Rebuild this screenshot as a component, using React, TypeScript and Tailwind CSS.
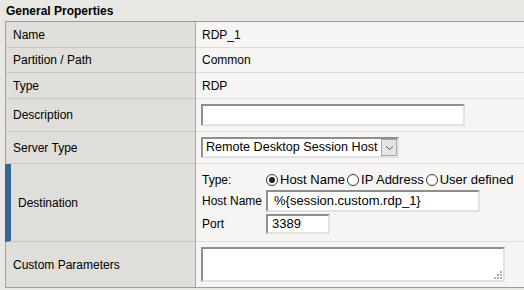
import React from 'react';

const font = { fontFamily: '"Liberation Sans", Arial, sans-serif' };

function Radio({ checked, label }: { checked?: boolean; label: string }) {
  return (
    <label className="flex items-center gap-[2px] text-[13px] text-black whitespace-nowrap">
      <span className="w-[12px] h-[12px] rounded-full border border-[#333] bg-white flex items-center justify-center">
        {checked && <span className="w-[6px] h-[6px] rounded-full bg-[#222]" />}
      </span>
      <span>{label}</span>
    </label>
  );
}

const inset =
  'border-2 border-t-[#8e8e8e] border-l-[#8e8e8e] border-b-[#e2e2e2] border-r-[#e2e2e2] bg-white';

function Row({
  label,
  height,
  accent,
  last,
  children,
}: {
  label: string;
  height: string;
  accent?: boolean;
  last?: boolean;
  children: React.ReactNode;
}) {
  return (
    <div className={`flex ${height}`}>
      <div
        className={`w-[191px] shrink-0 flex items-center pl-[7px] text-[12px] text-black bg-[#dfdedb] border-r border-r-[#a6a6a6] ${
          accent ? 'border-l-[6px] border-l-[#336699]' : 'border-l border-l-[#a0a0a0]'
        } ${last ? 'border-b border-b-[#9c9c9c]' : 'border-b border-b-[#c4c4c4]'}`}
      >
        {label}
      </div>
      <div
        className={`flex-1 flex items-center pl-[5px] bg-[#f6f5f3] text-[12px] text-black ${
          last ? 'border-b border-b-[#9c9c9c]' : 'border-b border-b-[#dddddd]'
        }`}
      >
        {children}
      </div>
    </div>
  );
}

export default function App() {
  return (
    <div className="w-[524px] h-[290px] overflow-hidden bg-[#e9e7e3]" style={font}>
      <div className="h-[21px] flex items-center pl-[6px] text-[12px] font-bold text-black">
        General Properties
      </div>
      <div className="ml-[5px] w-[540px] border-t border-t-[#999999]">
        <Row label="Name" height="h-[26px]">
          <span className="pl-[1px]">RDP_1</span>
        </Row>
        <Row label="Partition / Path" height="h-[25px]">
          <span className="pl-[1px]">Common</span>
        </Row>
        <Row label="Type" height="h-[26px]">
          <span className="pl-[1px]">RDP</span>
        </Row>
        <Row label="Description" height="h-[33px]">
          <div className={`w-[264px] h-[22px] ${inset}`} />
        </Row>
        <Row label="Server Type" height="h-[32px]">
          <div className={`w-[198px] h-[21px] flex items-center ${inset}`}>
            <span className="flex-1 pl-[3px] text-[12.6px] leading-none whitespace-nowrap">
              Remote Desktop Session Host
            </span>
            <span className="w-[16px] h-[17px] shrink-0 bg-[#e4e4e4] border border-[#a8a8a8] flex items-center justify-center">
              <svg width="9" height="6" viewBox="0 0 9 6">
                <path d="M1 1.5 L4.5 4.5 L8 1.5" stroke="#555" strokeWidth="1" fill="none" />
              </svg>
            </span>
          </div>
        </Row>
        <Row label="Destination" height="h-[78px]" accent>
          <div className="flex flex-col pl-[1px]">
            <div className="h-[18px] flex items-center">
              <span className="w-[64px]">Type:</span>
              <div className="flex items-center gap-[2px]">
                <Radio checked label="Host Name" />
                <Radio label="IP Address" />
                <Radio label="User defined" />
              </div>
            </div>
            <div className="mt-[1px] flex items-center">
              <span className="w-[64px]">Host Name</span>
              <div className={`w-[214px] h-[22px] flex items-center pl-[6px] text-[13px] ${inset}`}>
                %{'{'}session.custom.rdp_1{'}'}
              </div>
            </div>
            <div className="mt-[2px] flex items-center">
              <span className="w-[64px]">Port</span>
              <div className={`w-[64px] h-[20px] flex items-center pl-[4px] text-[13px] ${inset}`}>
                3389
              </div>
            </div>
          </div>
        </Row>
        <Row label="Custom Parameters" height="h-[46px]" last>
          <div className={`relative w-[304px] h-[35px] ${inset}`}>
            <svg className="absolute right-[1px] bottom-[1px]" width="8" height="8" viewBox="0 0 8 8">
              <rect x="6" y="0" width="2" height="2" fill="#b0b0b0" />
              <rect x="3" y="3" width="2" height="2" fill="#b0b0b0" />
              <rect x="6" y="3" width="2" height="2" fill="#b0b0b0" />
              <rect x="0" y="6" width="2" height="2" fill="#b0b0b0" />
              <rect x="3" y="6" width="2" height="2" fill="#b0b0b0" />
              <rect x="6" y="6" width="2" height="2" fill="#b0b0b0" />
            </svg>
          </div>
        </Row>
      </div>
    </div>
  );
}
